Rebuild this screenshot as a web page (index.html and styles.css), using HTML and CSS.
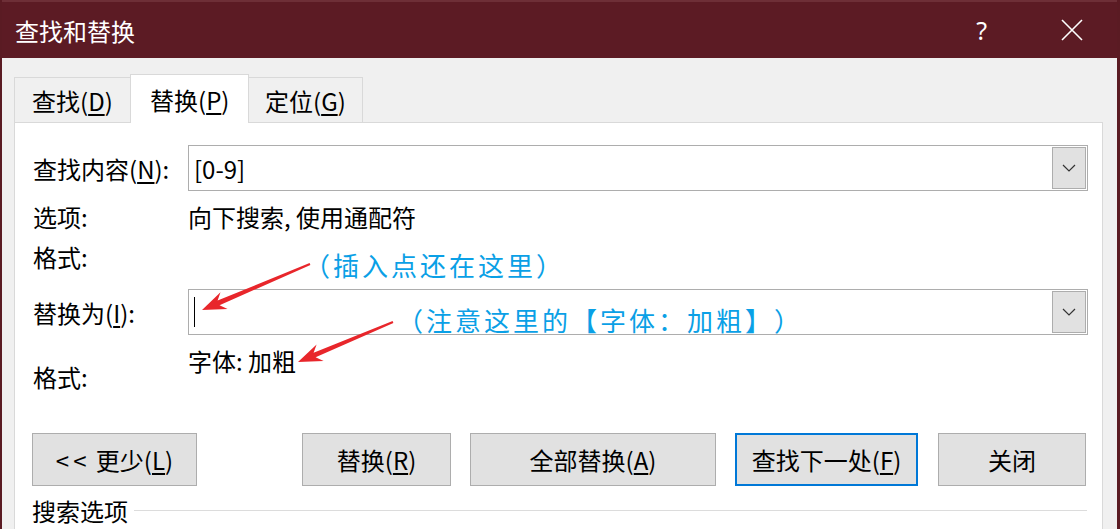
FILE: index.html
```html
<!DOCTYPE html>
<html lang="zh-CN">
<head>
<meta charset="utf-8">
<title>查找和替换</title>
<link rel="stylesheet" href="styles.css">
</head>
<body>
<div class="window">
  <header class="titlebar">
    <span class="title">查找和替换</span>
    <div class="controls">
      <span class="help">?</span>
      <svg class="close" width="22" height="22" viewBox="0 0 22 22"><path d="M1 1L21 21M21 1L1 21" stroke="#fff" stroke-width="1.6" fill="none"/></svg>
    </div>
  </header>
  <main class="body">
    <nav class="tabs">
      <div class="tab">查找(<u>D</u>)</div>
      <div class="tab active">替换(<u>P</u>)</div>
      <div class="tab">定位(<u>G</u>)</div>
    </nav>
    <section class="panel">
      <div class="row find">
        <span class="label">查找内容(<u>N</u>):</span>
        <div class="combo"><span class="value">[0-9]</span><span class="drop"><svg width="14" height="8" viewBox="0 0 14 8"><path d="M1 1L7 7L13 1" stroke="#333" stroke-width="1.2" fill="none"/></svg></span></div>
      </div>
      <div class="row opts">
        <span class="label">选项:</span>
        <span class="text">向下搜索, 使用通配符</span>
      </div>
      <div class="row fmt1">
        <span class="label">格式:</span>
      </div>
      <div class="row replace">
        <span class="label">替换为(<u>I</u>):</span>
        <div class="combo"><span class="caret"></span><span class="drop"><svg width="14" height="8" viewBox="0 0 14 8"><path d="M1 1L7 7L13 1" stroke="#333" stroke-width="1.2" fill="none"/></svg></span></div>
      </div>
      <div class="row fmt2">
        <span class="label">格式:</span>
        <span class="text">字体: 加粗</span>
      </div>
      <div class="buttons">
        <button class="btn b-less"><span class="chev">&lt;&lt;</span> 更少(<u>L</u>)</button>
        <button class="btn b-rep">替换(<u>R</u>)</button>
        <button class="btn b-all">全部替换(<u>A</u>)</button>
        <button class="btn b-next">查找下一处(<u>F</u>)</button>
        <button class="btn b-close">关闭</button>
      </div>
      <div class="section">
        <span>搜索选项</span>
        <span class="rule"></span>
      </div>
    </section>
  </main>
  <div class="note note1">（插入点还在这里）</div>
  <div class="note note2">（注意这里的【字体：加粗】）</div>
  <svg class="arrows" width="1120" height="529" viewBox="0 0 1120 529">
    <polygon fill="#e8262b" points="202,310 227.6,308.9 219.5,305.2 310.4,264.9 309.6,263.1 217.6,300.6 220.5,292.3"/>
    <polygon fill="#e8262b" points="298,362 323.6,361.0 315.6,357.3 393.4,322.9 392.6,321.1 313.6,352.7 316.6,344.4"/>
  </svg>
</div>
</body>
</html>
```
FILE: styles.css
```css
* { box-sizing: border-box; }
html, body { margin: 0; padding: 0; }
body {
  width: 1120px;
  height: 529px;
  overflow: hidden;
  background: #5a1b23;
  font-family: "Noto Sans CJK SC", "Noto Sans", sans-serif;
  color: #000;
  text-spacing-trim: space-all;
}
.window {
  position: relative;
  width: 1120px;
  height: 529px;
  padding: 0 3px 0 2px;
  background: #5a1b23;
  display: flex;
  flex-direction: column;
}
.titlebar {
  height: 58px;
  flex: none;
  background: #5c1b24;
  border-top: 2px solid #6e2f37;
  display: flex;
  align-items: center;
  justify-content: space-between;
  color: #fff;
}
.title {
  font-size: 24px;
  padding-left: 13px;
  line-height: 1;
  margin-top: 1px;
}
.controls {
  display: flex;
  align-items: center;
  gap: 74px;
  padding-right: 34px;
}
.help {
  font-family: "Noto Sans", sans-serif;
  font-size: 25px;
  line-height: 1;
}
.close { display: block; }
.body {
  flex: 1;
  background: #f0f0f0;
  padding: 16px 14px 0 12px;
  display: flex;
  flex-direction: column;
}
.tabs {
  display: flex;
  align-items: flex-end;
  height: 48px;
  flex: none;
  position: relative;
  z-index: 1;
}
.tab {
  height: 45px;
  padding: 0 8px 0 16px;
  background: #f0f0f0;
  border: 1px solid #d9d9d9;
  border-bottom: none;
  font-size: 24px;
  display: flex;
  align-items: center;
  margin-right: -1px;
  white-space: nowrap;
}
.tab:first-child { padding-left: 17px; width: 117px; }
.tab.active {
  height: 49px;
  background: #fff;
  width: 119px;
  margin-bottom: -1px;
  padding-left: 19px;
}
.tab:last-child { width: 115px; }
u { text-decoration: underline; text-underline-offset: 3px; text-decoration-thickness: 1.5px; }
.panel {
  flex: 1;
  background: #fff;
  border: 1px solid #d9d9d9;
  border-bottom: none;
  padding: 22px 15px 0 18px;
}
.row {
  display: flex;
  align-items: center;
  font-size: 24px;
}
.label { width: 155px; flex: none; white-space: nowrap; }
.find, .replace { height: 46px; }
.combo {
  flex: 1;
  height: 46px;
  border: 1px solid #adadad;
  display: flex;
  align-items: center;
  justify-content: space-between;
  padding: 0 1px 0 5px;
  margin-right: -1px;
}
.value { font-size: 24px; }
.caret {
  width: 1px;
  height: 30px;
  background: #000;
}
.drop {
  width: 34px;
  height: 42px;
  background: #e1e1e1;
  border: 1px solid #adadad;
  display: flex;
  align-items: center;
  justify-content: center;
}
.opts { height: 50px; }
.fmt1 { height: 30px; }
.replace { margin-top: 18px; }
.fmt2 {
  height: 58px;
  align-items: flex-start;
}
.fmt2 .label { padding-top: 24px; }
.fmt2 .text { padding-top: 8px; }
.buttons {
  display: flex;
  margin-top: 40px;
  height: 53px;
}
.btn {
  font-family: inherit;
  font-size: 24px;
  height: 53px;
  background: #e1e1e1;
  border: 1px solid #adadad;
  color: #000;
  padding: 0;
  margin: 0;
  white-space: nowrap;
}
.chev { letter-spacing: 4px; }
.b-less { width: 165px; margin-left: -1px; }
.b-rep { width: 149px; margin-left: 105px; }
.b-all { width: 246px; margin-left: 19px; }
.b-next { width: 183px; margin-left: 19px; border: 2px solid #0078d7; }
.b-close { width: 148px; margin-left: 20px; }
.section {
  display: flex;
  align-items: center;
  margin-top: 8px;
  font-size: 24px;
  margin-left: -1px;
  height: 32px;
}
.rule {
  flex: 1;
  height: 1px;
  background: #dcdcdc;
  margin-left: 6px;
}
.note {
  position: absolute;
  color: #0aa0e6;
  font-size: 26px;
  letter-spacing: 3px;
  line-height: 32px;
  white-space: nowrap;
  text-spacing-trim: space-all;
}
.note1 { left: 304px; top: 249px; }
.note2 { left: 397px; top: 304px; }
.arrows { position: absolute; left: 0; top: 0; pointer-events: none; }
```
